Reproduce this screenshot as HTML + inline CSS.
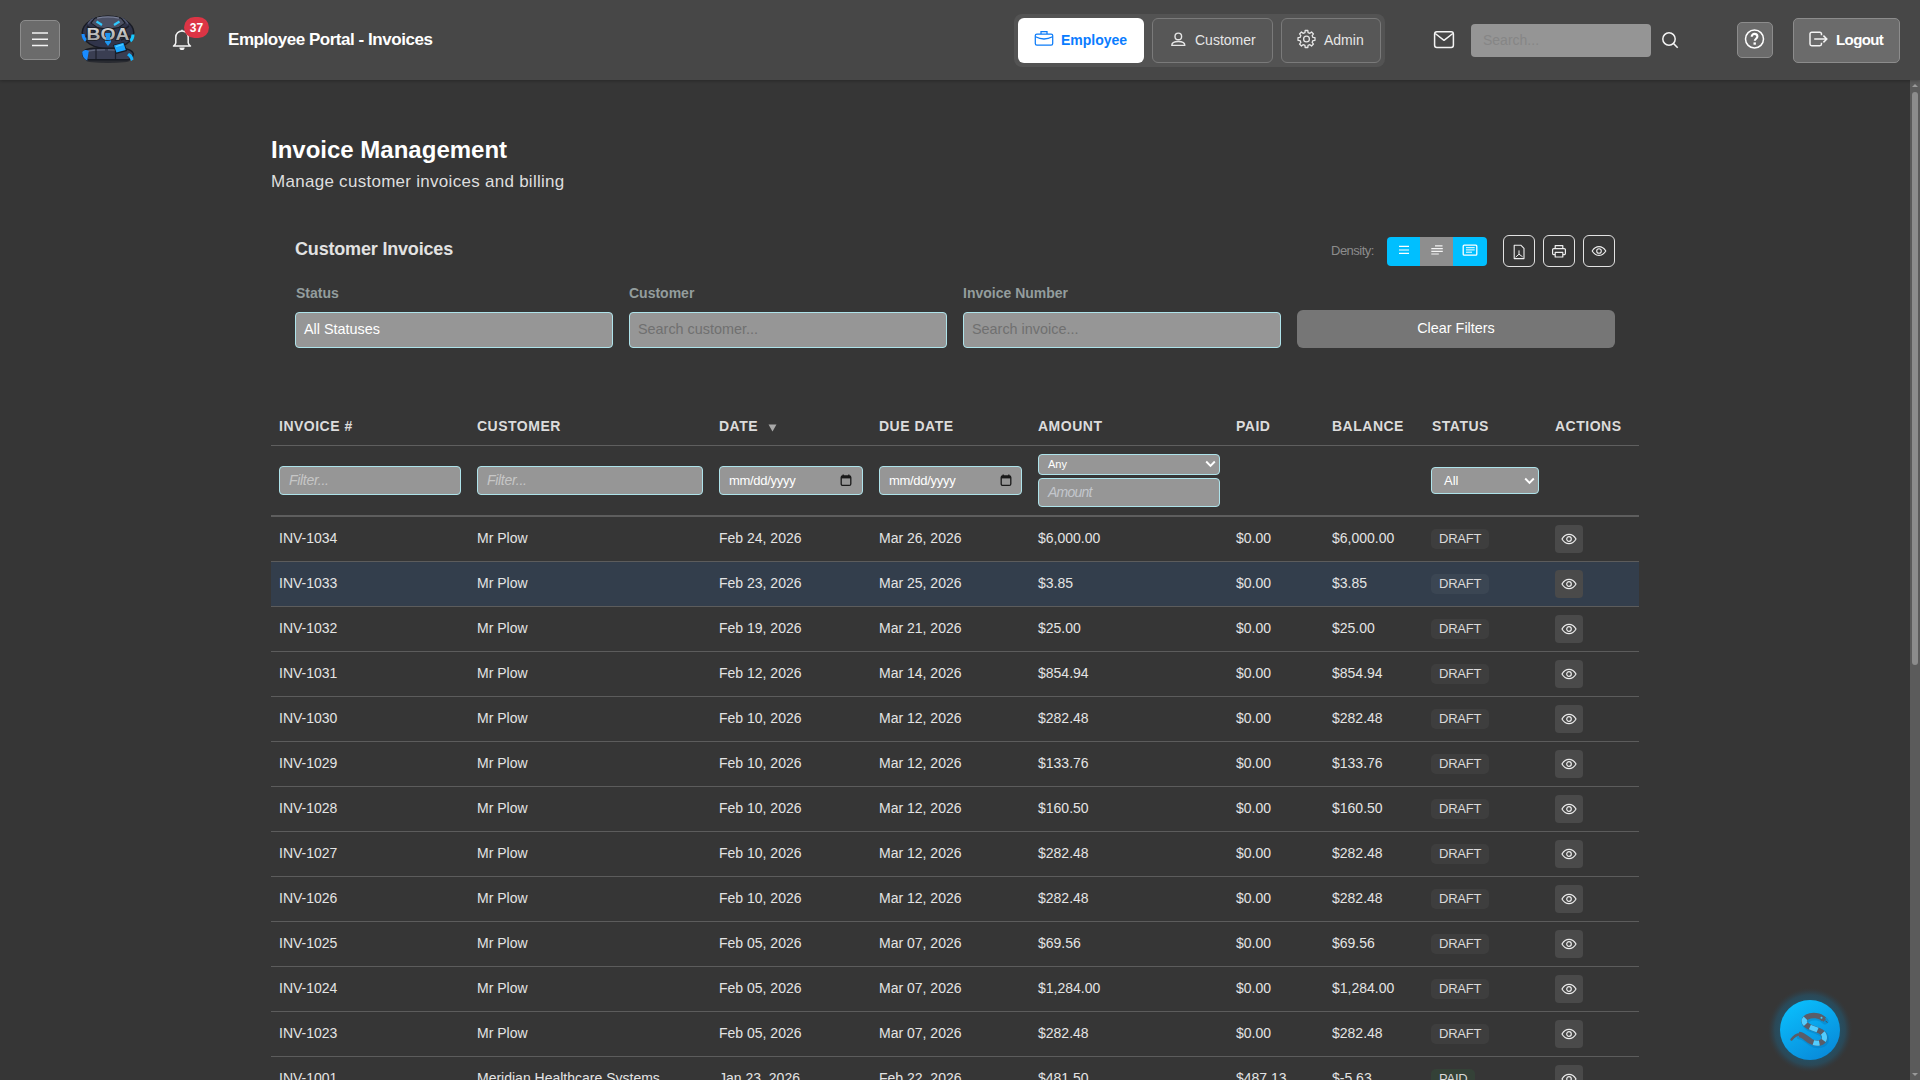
<!DOCTYPE html>
<html><head><meta charset="utf-8">
<style>
*{box-sizing:border-box;margin:0;padding:0}
html,body{width:1920px;height:1080px;overflow:hidden;background:#363636;font-family:"Liberation Sans",sans-serif;color:#e0e0e0}
.abs{position:absolute}
#hdr{position:absolute;left:0;top:0;width:1920px;height:80px;background:#474747;box-shadow:0 1px 3px rgba(0,0,0,0.25);z-index:2}
.btn-g{position:absolute;background:#6b6b6b;border:1px solid #8c8c8c;border-radius:5px}
.rolewrap{position:absolute;left:1014px;top:14px;width:371px;height:53px;background:#535353;border-radius:8px}
.role{position:absolute;top:18px;height:45px;border-radius:6px;font-size:14px}
.role span{position:absolute;top:0;line-height:44px;white-space:nowrap}
#sb{position:absolute;left:1910px;top:80px;width:10px;height:1000px;background:#5b5b5b}
.lbl{position:absolute;top:285px;font-size:14px;font-weight:bold;color:#939d9d;line-height:16px}
.inp{position:absolute;top:312px;width:318px;height:36px;background:#969696;border:1px solid #aee3ea;border-radius:4px;font-size:14.4px;padding-left:8px;line-height:33px;color:#707070}
.th{position:absolute;top:418px;font-size:14px;font-weight:bold;letter-spacing:0.5px;color:#dcdcdc;line-height:16px}
.row{position:absolute;left:271px;width:1368px;height:45px;border-bottom:1px solid #5c5c5c}
.c{position:absolute;top:0;line-height:42px;font-size:14px;color:#e4e4e4;white-space:nowrap}
.badge{position:absolute;left:1160px;top:12px;height:20px;padding:0 8px 0 8px;line-height:20px;background:rgba(255,255,255,0.045);border-radius:5px;font-size:13px;color:#dadada;letter-spacing:-0.25px}
.badge.paid{background:rgba(40,167,69,0.1)}
.eye{position:absolute;left:1284px;top:8px;width:28px;height:28px;background:#4a4a4a;border-radius:4px}
.eye svg{position:absolute;left:6px;top:8px}
.fin{position:absolute;height:29px;background:#969696;border:1px solid #aee3ea;border-radius:4px;font-size:13px;padding-left:9px;line-height:27px;white-space:nowrap}
.ib{position:absolute;top:235px;width:32px;height:32px;border:1px solid #e2e2e2;border-radius:6px}
.ib svg{position:absolute;left:7px;top:7px}
</style></head><body>
<div id="hdr">
  <div class="btn-g" style="left:20px;top:20px;width:40px;height:40px"></div>
  <svg class="abs" style="left:30px;top:30px" width="20" height="20" viewBox="0 0 20 20"><path d="M2 2.8h16M2 9h16M2 15.2h16" transform="translate(0,0.2)" stroke="#f2f2f2" stroke-width="1.5"/></svg>
  <svg class="abs" id="logo" style="left:78px;top:12px" width="60" height="54" viewBox="0 0 60 54">
    <defs><linearGradient id="silv" x1="0" y1="0" x2="0" y2="1"><stop offset="0" stop-color="#dcdcdc"/><stop offset="1" stop-color="#9a9a9a"/></linearGradient></defs>
    <ellipse cx="30" cy="48.5" rx="22" ry="2.5" fill="#1c1f28" opacity="0.7"/>
    <ellipse cx="30" cy="20.5" rx="26.5" ry="17" fill="#181b24"/>
    <ellipse cx="30" cy="20.5" rx="25" ry="15.5" fill="#30344a"/>
    <path d="M9 14l8 6M8 24l9 4M51 14l-8 6M52 24l-9 4" stroke="#1c1f2a" stroke-width="1.6"/>
    <path d="M10 12c2-3 4-5 7-6M50 12c-2-3-4-5-7-6" stroke="#505672" stroke-width="1.4" fill="none"/>
    <path d="M16 6Q30 1.5 44 6L47.5 11L41 16L30 18L19 16L12.5 11z" fill="#171a22"/>
    <path d="M17 6.8Q30 2.8 43 6.8L46.3 11L40.5 15L30 16.8L19.5 15L13.7 11z" fill="#4b5064"/>
    <path d="M19 6.2Q30 3.4 41 6.2" stroke="#7a8098" stroke-width="1.2" fill="none"/>
    <path d="M18.5 9.5l5.5 3.5M41.5 9.5l-5.5 3.5" stroke="#30c8ff" stroke-width="2.2"/>
    <path d="M5 22c0 3 1.2 5 3 6.5" stroke="#1a8cff" stroke-width="3" fill="none"/>
    <path d="M55 22.5c0 3-1 5-2.8 6.5" stroke="#18c8ff" stroke-width="3" fill="none"/>
    <path d="M4 41.5C5 37 10 35.5 18 35.5h22c8 0 14 1 16 6c0 4-3 7-7 7H11c-4 0-7-3-7-7z" fill="#171a22"/>
    <path d="M5.5 41.5C6.5 38 11 37 18 37h22c7 0 12.5 1 14.5 4.5c0 3.5-2.5 5.5-6 5.5H11.5c-3.5 0-6-2.2-6-5.5z" fill="#3a3e52"/>
    <path d="M10 39c5-1 10-1.2 17-1.2M30 37.8c5 0 9 .2 12 .8" stroke="#60667c" stroke-width="1.3" fill="none"/>
    <path d="M18 37v10M37.5 37v10" stroke="#1c1f2a" stroke-width="1.2"/>
    <path d="M4.2 40c0 4 1.5 7 5 8.5l1.6-9.5c-2.2-1.5-4.6-1.4-6.6 1z" fill="#1a8cff"/>
    <path d="M51 41c2.5 1 4 3 4.5 6.5l-2.5 1.5c-.8-2.6-2-4.6-4-5.8z" fill="#16b4ff"/>
    <path d="M35 33l11-3 3.2 9-11 3z" fill="#171a22"/>
    <path d="M36 33.4l9.4-2.6 2.4 7.2-9.4 2.6z" fill="#1aa6ff"/>
    <path d="M38 34.5l7-2" stroke="#5ad6ff" stroke-width="1.2"/>
    <path d="M27 21h6v9l-3 4l-3-4z" fill="#1e96f0"/>
    <text x="30" y="28" text-anchor="middle" font-family="Liberation Sans" font-weight="bold" font-size="15.8" fill="url(#silv)" stroke="#1a1c22" stroke-width="1.6" paint-order="stroke" textLength="43" lengthAdjust="spacingAndGlyphs">BOA</text>
    <path d="M28 21.5h4v6.5h-4z" fill="#1e96f0"/>
  </svg>
  <svg class="abs" style="left:171px;top:28px" width="22" height="24" viewBox="0 0 22 24"><path d="M11 3c-3.6 0-6.2 2.8-6.2 6.3v5.4c0 1-.9 2.3-2.3 3.3h17c-1.4-1-2.3-2.3-2.3-3.3V9.3C17.2 5.8 14.6 3 11 3z" fill="none" stroke="#f4f4f4" stroke-width="1.5" stroke-linejoin="round"/><path d="M11 1.8v1.4" stroke="#f4f4f4" stroke-width="1.5"/><path d="M8.4 19.4a2.6 2.6 0 0 0 5.2 0z" fill="#f4f4f4"/></svg>
  <div class="abs" style="left:184px;top:17px;width:25px;height:21px;border-radius:11px;background:#dc3545;color:#fff;font-size:12px;font-weight:bold;text-align:center;line-height:22px">37</div>
  <div class="abs" style="left:228px;top:30px;font-size:17px;font-weight:bold;color:#fff;line-height:19px;letter-spacing:-0.46px;white-space:nowrap">Employee Portal - Invoices</div>
  <div class="rolewrap"></div>
  <div class="role" style="left:1018px;width:126px;background:#fff;color:#0a7cff;font-weight:bold">
    <svg class="abs" style="left:16px;top:11px" width="20" height="20" viewBox="0 0 20 20"><rect x="1.3" y="5" width="17.4" height="11.2" rx="1.6" fill="none" stroke="#0d7cf8" stroke-width="1.25"/><path d="M7 5V2.6h6V5" fill="none" stroke="#0d7cf8" stroke-width="1.25"/><path d="M1.5 7.8Q10 12.2 18.5 7.8" fill="none" stroke="#0d7cf8" stroke-width="1.25"/></svg>
    <span style="left:43px">Employee</span></div>
  <div class="role" style="left:1152px;width:121px;background:#575757;border:1px solid #7a7a7a;color:#e6e6e6">
    <svg class="abs" style="left:17px;top:11px" width="18" height="18" viewBox="0 0 18 18"><circle cx="8.3" cy="6.4" r="3.3" fill="none" stroke="#e6e6e6" stroke-width="1.4"/><path d="M1.8 15.4c0-2.7 2.7-3.9 6.5-3.9s6.5 1.2 6.5 3.9z" fill="none" stroke="#e6e6e6" stroke-width="1.4" stroke-linejoin="round"/></svg>
    <span style="left:42px;top:-1px">Customer</span></div>
  <div class="role" style="left:1281px;width:100px;background:#575757;border:1px solid #7a7a7a;color:#e6e6e6">
    <svg class="abs" style="left:14px;top:10px" width="21" height="21" viewBox="-0.5 0 21 21"><circle cx="10" cy="10" r="2.9" fill="none" stroke="#e6e6e6" stroke-width="1.3"/><path d="M16.42 8.46 L18.49 8.65 L18.49 11.35 L16.42 11.54 L15.63 13.45 L16.96 15.05 L15.05 16.96 L13.45 15.63 L11.54 16.42 L11.35 18.49 L8.65 18.49 L8.46 16.42 L6.55 15.63 L4.95 16.96 L3.04 15.05 L4.37 13.45 L3.58 11.54 L1.51 11.35 L1.51 8.65 L3.58 8.46 L4.37 6.55 L3.04 4.95 L4.95 3.04 L6.55 4.37 L8.46 3.58 L8.65 1.51 L11.35 1.51 L11.54 3.58 L13.45 4.37 L15.05 3.04 L16.96 4.95 L15.63 6.55z" fill="none" stroke="#e6e6e6" stroke-width="1.3" stroke-linejoin="round"/></svg>
    <span style="left:42px;top:-1px">Admin</span></div>
  <svg class="abs" style="left:1433px;top:30px" width="22" height="20" viewBox="0 0 22 20"><rect x="1.6" y="1.8" width="18.8" height="15.6" rx="2.2" fill="none" stroke="#f4f4f4" stroke-width="1.5"/><path d="M2.2 3.5l8.8 6.8 8.8-6.8" fill="none" stroke="#f4f4f4" stroke-width="1.5" stroke-linejoin="round"/></svg>
  <div class="abs" style="left:1471px;top:24px;width:180px;height:33px;background:#959595;border-radius:4px;font-size:14px;color:#868686;padding-left:12px;line-height:32px">Search...</div>
  <svg class="abs" style="left:1660px;top:30px" width="20" height="20" viewBox="0 0 20 20"><circle cx="9" cy="9" r="6.2" fill="none" stroke="#f4f4f4" stroke-width="1.5"/><path d="M13.5 13.5l4.2 4.2" stroke="#f4f4f4" stroke-width="1.6"/></svg>
  <div class="btn-g" style="left:1737px;top:22px;width:36px;height:36px"></div>
  <svg class="abs" style="left:1744px;top:29px" width="22" height="21" viewBox="0 0 22 21"><circle cx="10.5" cy="10" r="9" fill="none" stroke="#fff" stroke-width="1.5"/><path d="M7.7 7.8c0-1.8 1.2-2.9 2.8-2.9s2.9 1 2.9 2.7c0 2.1-2.6 2.2-2.6 4.2" fill="none" stroke="#fff" stroke-width="2.1"/><rect x="9.5" y="13.4" width="2.4" height="2.3" fill="#fff"/></svg>
  <div class="btn-g" style="left:1793px;top:18px;width:107px;height:45px"></div>
  <svg class="abs" style="left:1807px;top:30px" width="24" height="18" viewBox="0 0 24 18"><path d="M14.5 5.2V3.9A1.7 1.7 0 0 0 12.8 2.2H4.7A1.7 1.7 0 0 0 3 3.9v10.2A1.7 1.7 0 0 0 4.7 15.8h8.1A1.7 1.7 0 0 0 14.5 14.1V12.8" fill="none" stroke="#f4f4f4" stroke-width="1.5"/><path d="M7.2 9h12.6M16.4 5.6l3.4 3.4-3.4 3.4" fill="none" stroke="#f4f4f4" stroke-width="1.5"/></svg>
  <div class="abs" style="left:1836px;top:31px;font-size:15px;font-weight:bold;color:#fff;line-height:18px;letter-spacing:-0.6px">Logout</div>
</div>
<div id="sb">
  <svg class="abs" style="left:0;top:0" width="10" height="10" viewBox="0 0 10 10"><path d="M2 7h6L5 4z" fill="#9a9a9a"/></svg>
  <div class="abs" style="left:2px;top:12px;width:6px;height:573px;border-radius:3px;background:#8c8c8c"></div>
  <svg class="abs" style="left:0;top:990px" width="10" height="10" viewBox="0 0 10 10"><path d="M2 3h6L5 6z" fill="#9a9a9a"/></svg>
</div>
<div class="abs" style="left:271px;top:137px;font-size:24px;font-weight:bold;color:#fff;line-height:26px;white-space:nowrap">Invoice Management</div>
<div class="abs" style="left:271px;top:172px;font-size:17px;color:#dedede;line-height:20px;letter-spacing:0.28px;white-space:nowrap">Manage customer invoices and billing</div>
<div class="abs" style="left:295px;top:239px;font-size:18px;font-weight:bold;color:#e2e2e2;line-height:20px;letter-spacing:-0.18px;white-space:nowrap">Customer Invoices</div>
<div class="abs" style="left:1331px;top:243px;font-size:13px;color:#8c8c8c;line-height:15px;letter-spacing:-0.5px">Density:</div>
<div class="abs" style="left:1387px;top:237px;width:100px;height:29px;border-radius:4px;overflow:hidden;background:#00bfff">
  <div class="abs" style="left:33px;top:0;width:33px;height:29px;background:#8e8e8e"></div>
  <svg class="abs" style="left:11px;top:8px" width="12" height="12" viewBox="0 0 12 12"><path d="M1 1.4h10M1 5h10M1 8.4h10" stroke="#fff" stroke-width="1.1"/></svg>
  <svg class="abs" style="left:44px;top:7px" width="13" height="13" viewBox="0 0 13 13"><path d="M4 1.9h7.5M0.3 4.6h11.5M0.3 7.4h11.5M0.3 10h7.5" stroke="#f4f4f4" stroke-width="1.2"/></svg>
  <svg class="abs" style="left:75px;top:7px" width="16" height="13" viewBox="0 0 16 13"><rect x="1.2" y="1.2" width="13.6" height="10" rx="1" fill="none" stroke="#fff" stroke-width="1.3"/><path d="M4 3.7h8.7M4 5.9h8.7M4 8.2h6" stroke="#fff" stroke-width="1"/></svg>
</div>
<div class="ib" style="left:1503px"><svg width="16" height="16" viewBox="0 0 16 16" style="left:7px;top:8px"><path d="M3.2 1.2h6.6l3.2 3.2v10.2H3.2z" fill="none" stroke="#eee" stroke-width="1.1" stroke-linejoin="round"/><path d="M4.6 13.2L8 10.2l3.6 2.6M8 10.2V6.4" fill="none" stroke="#eee" stroke-width="1"/></svg></div>
<div class="ib" style="left:1543px"><svg width="16" height="16" viewBox="0 0 16 16" style="left:7px;top:8px"><path d="M4.2 4.6V1.6h7.6v3M4 10.6H2.6a1 1 0 0 1-1-1V5.8a1.2 1.2 0 0 1 1.2-1.2h10.4a1.2 1.2 0 0 1 1.2 1.2v3.8a1 1 0 0 1-1 1H12M4.2 8.4h7.6v4.6H4.2z" fill="none" stroke="#eee" stroke-width="1.2" stroke-linejoin="round"/></svg></div>
<div class="ib" style="left:1583px"><svg width="16" height="16" viewBox="0 0 16 16" style="left:7px;top:7px"><path d="M1.2 8C2.9 5.2 5.2 3.6 8 3.6s5.1 1.6 6.8 4.4C13.1 10.8 10.8 12.4 8 12.4S2.9 10.8 1.2 8z" fill="none" stroke="#eee" stroke-width="1.1"/><circle cx="8" cy="8" r="2.3" fill="none" stroke="#eee" stroke-width="1.1"/></svg></div>

<div class="lbl" style="left:296px">Status</div>
<div class="lbl" style="left:629px">Customer</div>
<div class="lbl" style="left:963px">Invoice Number</div>
<div class="inp" style="left:295px;color:#fff">All Statuses</div>
<div class="inp" style="left:629px">Search customer...</div>
<div class="inp" style="left:963px">Search invoice...</div>
<div class="abs" style="left:1297px;top:310px;width:318px;height:38px;background:#767676;border-radius:6px;font-size:14.4px;color:#fff;text-align:center;line-height:37px">Clear Filters</div>

<div class="th" style="left:279px">INVOICE #</div>
<div class="th" style="left:477px">CUSTOMER</div>
<div class="th" style="left:719px">DATE</div>
<svg class="abs" style="left:768px;top:424px" width="9" height="8" viewBox="0 0 9 8"><path d="M0.5 0.5h8L4.5 7.5z" fill="#a8a8a8"/></svg>
<div class="th" style="left:879px">DUE DATE</div>
<div class="th" style="left:1038px">AMOUNT</div>
<div class="th" style="left:1236px">PAID</div>
<div class="th" style="left:1332px">BALANCE</div>
<div class="th" style="left:1432px">STATUS</div>
<div class="th" style="left:1555px">ACTIONS</div>
<div class="abs" style="left:271px;top:445px;width:1368px;height:1px;background:#5f5f5f"></div>
<div class="fin" style="left:279px;top:466px;width:182px;font-style:italic;color:#c6c6c6;font-size:14px;letter-spacing:-0.3px">Filter...</div>
<div class="fin" style="left:477px;top:466px;width:226px;font-style:italic;color:#c6c6c6;font-size:14px;letter-spacing:-0.3px">Filter...</div>
<div class="fin" style="left:719px;top:466px;width:144px;color:#fff;letter-spacing:-0.3px">mm/dd/yyyy
  <svg class="abs" style="left:120px;top:7px" width="12" height="13" viewBox="0 0 12 13"><path d="M3.2 .6v2M8.8 .6v2" stroke="#1a1a1a" stroke-width="1.3"/><rect x="1.2" y="2" width="9.6" height="9.4" rx="1.5" fill="none" stroke="#1a1a1a" stroke-width="1.3"/><rect x="1.2" y="2" width="9.6" height="2.4" fill="#1a1a1a"/></svg></div>
<div class="fin" style="left:879px;top:466px;width:143px;color:#fff;letter-spacing:-0.3px">mm/dd/yyyy
  <svg class="abs" style="left:120px;top:7px" width="12" height="13" viewBox="0 0 12 13"><path d="M3.2 .6v2M8.8 .6v2" stroke="#1a1a1a" stroke-width="1.3"/><rect x="1.2" y="2" width="9.6" height="9.4" rx="1.5" fill="none" stroke="#1a1a1a" stroke-width="1.3"/><rect x="1.2" y="2" width="9.6" height="2.4" fill="#1a1a1a"/></svg></div>
<div class="fin" style="left:1038px;top:454px;width:182px;height:21px;font-size:11px;line-height:19px;padding-left:9px;color:#fff">Any
  <svg class="abs" style="left:166px;top:5px" width="11" height="8" viewBox="0 0 11 8"><path d="M1.2 1.5l4.3 4.3 4.3-4.3" fill="none" stroke="#fff" stroke-width="1.9"/></svg></div>
<div class="fin" style="left:1038px;top:478px;width:182px;font-style:italic;color:#c3c6cc;font-size:14px;letter-spacing:-0.75px">Amount</div>
<div class="fin" style="left:1431px;top:467px;width:108px;height:27px;color:#fff;padding-left:12px;font-size:13px;line-height:25px">All
  <svg class="abs" style="left:92px;top:9px" width="11" height="8" viewBox="0 0 11 8"><path d="M1.2 1.5l4.3 4.3 4.3-4.3" fill="none" stroke="#fff" stroke-width="1.9"/></svg></div>
<div class="abs" style="left:271px;top:515px;width:1368px;height:2px;background:#5e5e5e"></div>
<div class="row" style="top:517px"><div class="c" style="left:8px">INV-1034</div><div class="c" style="left:206px">Mr Plow</div><div class="c" style="left:448px">Feb 24, 2026</div><div class="c" style="left:608px">Mar 26, 2026</div><div class="c" style="left:767px">$6,000.00</div><div class="c" style="left:965px">$0.00</div><div class="c" style="left:1061px">$6,000.00</div><div class="badge">DRAFT</div><div class="eye"><svg width="16" height="12" viewBox="0 0 16 12"><path d="M1 6C2.7 3 5.1 1.3 8 1.3S13.3 3 15 6c-1.7 3-4.1 4.7-7 4.7S2.7 9 1 6z" fill="none" stroke="#ececec" stroke-width="1.2"/><circle cx="8" cy="6" r="2.3" fill="none" stroke="#ececec" stroke-width="1.2"/></svg></div></div>
<div class="row" style="top:562px;background:#333e4c"><div class="c" style="left:8px">INV-1033</div><div class="c" style="left:206px">Mr Plow</div><div class="c" style="left:448px">Feb 23, 2026</div><div class="c" style="left:608px">Mar 25, 2026</div><div class="c" style="left:767px">$3.85</div><div class="c" style="left:965px">$0.00</div><div class="c" style="left:1061px">$3.85</div><div class="badge">DRAFT</div><div class="eye"><svg width="16" height="12" viewBox="0 0 16 12"><path d="M1 6C2.7 3 5.1 1.3 8 1.3S13.3 3 15 6c-1.7 3-4.1 4.7-7 4.7S2.7 9 1 6z" fill="none" stroke="#ececec" stroke-width="1.2"/><circle cx="8" cy="6" r="2.3" fill="none" stroke="#ececec" stroke-width="1.2"/></svg></div></div>
<div class="row" style="top:607px"><div class="c" style="left:8px">INV-1032</div><div class="c" style="left:206px">Mr Plow</div><div class="c" style="left:448px">Feb 19, 2026</div><div class="c" style="left:608px">Mar 21, 2026</div><div class="c" style="left:767px">$25.00</div><div class="c" style="left:965px">$0.00</div><div class="c" style="left:1061px">$25.00</div><div class="badge">DRAFT</div><div class="eye"><svg width="16" height="12" viewBox="0 0 16 12"><path d="M1 6C2.7 3 5.1 1.3 8 1.3S13.3 3 15 6c-1.7 3-4.1 4.7-7 4.7S2.7 9 1 6z" fill="none" stroke="#ececec" stroke-width="1.2"/><circle cx="8" cy="6" r="2.3" fill="none" stroke="#ececec" stroke-width="1.2"/></svg></div></div>
<div class="row" style="top:652px"><div class="c" style="left:8px">INV-1031</div><div class="c" style="left:206px">Mr Plow</div><div class="c" style="left:448px">Feb 12, 2026</div><div class="c" style="left:608px">Mar 14, 2026</div><div class="c" style="left:767px">$854.94</div><div class="c" style="left:965px">$0.00</div><div class="c" style="left:1061px">$854.94</div><div class="badge">DRAFT</div><div class="eye"><svg width="16" height="12" viewBox="0 0 16 12"><path d="M1 6C2.7 3 5.1 1.3 8 1.3S13.3 3 15 6c-1.7 3-4.1 4.7-7 4.7S2.7 9 1 6z" fill="none" stroke="#ececec" stroke-width="1.2"/><circle cx="8" cy="6" r="2.3" fill="none" stroke="#ececec" stroke-width="1.2"/></svg></div></div>
<div class="row" style="top:697px"><div class="c" style="left:8px">INV-1030</div><div class="c" style="left:206px">Mr Plow</div><div class="c" style="left:448px">Feb 10, 2026</div><div class="c" style="left:608px">Mar 12, 2026</div><div class="c" style="left:767px">$282.48</div><div class="c" style="left:965px">$0.00</div><div class="c" style="left:1061px">$282.48</div><div class="badge">DRAFT</div><div class="eye"><svg width="16" height="12" viewBox="0 0 16 12"><path d="M1 6C2.7 3 5.1 1.3 8 1.3S13.3 3 15 6c-1.7 3-4.1 4.7-7 4.7S2.7 9 1 6z" fill="none" stroke="#ececec" stroke-width="1.2"/><circle cx="8" cy="6" r="2.3" fill="none" stroke="#ececec" stroke-width="1.2"/></svg></div></div>
<div class="row" style="top:742px"><div class="c" style="left:8px">INV-1029</div><div class="c" style="left:206px">Mr Plow</div><div class="c" style="left:448px">Feb 10, 2026</div><div class="c" style="left:608px">Mar 12, 2026</div><div class="c" style="left:767px">$133.76</div><div class="c" style="left:965px">$0.00</div><div class="c" style="left:1061px">$133.76</div><div class="badge">DRAFT</div><div class="eye"><svg width="16" height="12" viewBox="0 0 16 12"><path d="M1 6C2.7 3 5.1 1.3 8 1.3S13.3 3 15 6c-1.7 3-4.1 4.7-7 4.7S2.7 9 1 6z" fill="none" stroke="#ececec" stroke-width="1.2"/><circle cx="8" cy="6" r="2.3" fill="none" stroke="#ececec" stroke-width="1.2"/></svg></div></div>
<div class="row" style="top:787px"><div class="c" style="left:8px">INV-1028</div><div class="c" style="left:206px">Mr Plow</div><div class="c" style="left:448px">Feb 10, 2026</div><div class="c" style="left:608px">Mar 12, 2026</div><div class="c" style="left:767px">$160.50</div><div class="c" style="left:965px">$0.00</div><div class="c" style="left:1061px">$160.50</div><div class="badge">DRAFT</div><div class="eye"><svg width="16" height="12" viewBox="0 0 16 12"><path d="M1 6C2.7 3 5.1 1.3 8 1.3S13.3 3 15 6c-1.7 3-4.1 4.7-7 4.7S2.7 9 1 6z" fill="none" stroke="#ececec" stroke-width="1.2"/><circle cx="8" cy="6" r="2.3" fill="none" stroke="#ececec" stroke-width="1.2"/></svg></div></div>
<div class="row" style="top:832px"><div class="c" style="left:8px">INV-1027</div><div class="c" style="left:206px">Mr Plow</div><div class="c" style="left:448px">Feb 10, 2026</div><div class="c" style="left:608px">Mar 12, 2026</div><div class="c" style="left:767px">$282.48</div><div class="c" style="left:965px">$0.00</div><div class="c" style="left:1061px">$282.48</div><div class="badge">DRAFT</div><div class="eye"><svg width="16" height="12" viewBox="0 0 16 12"><path d="M1 6C2.7 3 5.1 1.3 8 1.3S13.3 3 15 6c-1.7 3-4.1 4.7-7 4.7S2.7 9 1 6z" fill="none" stroke="#ececec" stroke-width="1.2"/><circle cx="8" cy="6" r="2.3" fill="none" stroke="#ececec" stroke-width="1.2"/></svg></div></div>
<div class="row" style="top:877px"><div class="c" style="left:8px">INV-1026</div><div class="c" style="left:206px">Mr Plow</div><div class="c" style="left:448px">Feb 10, 2026</div><div class="c" style="left:608px">Mar 12, 2026</div><div class="c" style="left:767px">$282.48</div><div class="c" style="left:965px">$0.00</div><div class="c" style="left:1061px">$282.48</div><div class="badge">DRAFT</div><div class="eye"><svg width="16" height="12" viewBox="0 0 16 12"><path d="M1 6C2.7 3 5.1 1.3 8 1.3S13.3 3 15 6c-1.7 3-4.1 4.7-7 4.7S2.7 9 1 6z" fill="none" stroke="#ececec" stroke-width="1.2"/><circle cx="8" cy="6" r="2.3" fill="none" stroke="#ececec" stroke-width="1.2"/></svg></div></div>
<div class="row" style="top:922px"><div class="c" style="left:8px">INV-1025</div><div class="c" style="left:206px">Mr Plow</div><div class="c" style="left:448px">Feb 05, 2026</div><div class="c" style="left:608px">Mar 07, 2026</div><div class="c" style="left:767px">$69.56</div><div class="c" style="left:965px">$0.00</div><div class="c" style="left:1061px">$69.56</div><div class="badge">DRAFT</div><div class="eye"><svg width="16" height="12" viewBox="0 0 16 12"><path d="M1 6C2.7 3 5.1 1.3 8 1.3S13.3 3 15 6c-1.7 3-4.1 4.7-7 4.7S2.7 9 1 6z" fill="none" stroke="#ececec" stroke-width="1.2"/><circle cx="8" cy="6" r="2.3" fill="none" stroke="#ececec" stroke-width="1.2"/></svg></div></div>
<div class="row" style="top:967px"><div class="c" style="left:8px">INV-1024</div><div class="c" style="left:206px">Mr Plow</div><div class="c" style="left:448px">Feb 05, 2026</div><div class="c" style="left:608px">Mar 07, 2026</div><div class="c" style="left:767px">$1,284.00</div><div class="c" style="left:965px">$0.00</div><div class="c" style="left:1061px">$1,284.00</div><div class="badge">DRAFT</div><div class="eye"><svg width="16" height="12" viewBox="0 0 16 12"><path d="M1 6C2.7 3 5.1 1.3 8 1.3S13.3 3 15 6c-1.7 3-4.1 4.7-7 4.7S2.7 9 1 6z" fill="none" stroke="#ececec" stroke-width="1.2"/><circle cx="8" cy="6" r="2.3" fill="none" stroke="#ececec" stroke-width="1.2"/></svg></div></div>
<div class="row" style="top:1012px"><div class="c" style="left:8px">INV-1023</div><div class="c" style="left:206px">Mr Plow</div><div class="c" style="left:448px">Feb 05, 2026</div><div class="c" style="left:608px">Mar 07, 2026</div><div class="c" style="left:767px">$282.48</div><div class="c" style="left:965px">$0.00</div><div class="c" style="left:1061px">$282.48</div><div class="badge">DRAFT</div><div class="eye"><svg width="16" height="12" viewBox="0 0 16 12"><path d="M1 6C2.7 3 5.1 1.3 8 1.3S13.3 3 15 6c-1.7 3-4.1 4.7-7 4.7S2.7 9 1 6z" fill="none" stroke="#ececec" stroke-width="1.2"/><circle cx="8" cy="6" r="2.3" fill="none" stroke="#ececec" stroke-width="1.2"/></svg></div></div>
<div class="row" style="top:1057px"><div class="c" style="left:8px">INV-1001</div><div class="c" style="left:206px">Meridian Healthcare Systems</div><div class="c" style="left:448px">Jan 23, 2026</div><div class="c" style="left:608px">Feb 22, 2026</div><div class="c" style="left:767px">$481.50</div><div class="c" style="left:965px">$487.13</div><div class="c" style="left:1061px">$-5.63</div><div class="badge paid">PAID</div><div class="eye"><svg width="16" height="12" viewBox="0 0 16 12"><path d="M1 6C2.7 3 5.1 1.3 8 1.3S13.3 3 15 6c-1.7 3-4.1 4.7-7 4.7S2.7 9 1 6z" fill="none" stroke="#ececec" stroke-width="1.2"/><circle cx="8" cy="6" r="2.3" fill="none" stroke="#ececec" stroke-width="1.2"/></svg></div></div>
<svg class="abs" style="left:1766px;top:986px" width="88" height="88" viewBox="0 0 88 88">
  <defs>
    <radialGradient id="glow" cx="44" cy="44" r="43" gradientUnits="userSpaceOnUse"><stop offset="0.68" stop-color="#254f63"/><stop offset="0.82" stop-color="#2b4856"/><stop offset="0.9" stop-color="#303f47" stop-opacity="0.7"/><stop offset="1" stop-color="#363636" stop-opacity="0"/></radialGradient>
    <linearGradient id="fabg" x1="0.2" y1="0" x2="0.8" y2="1"><stop offset="0" stop-color="#0abffd"/><stop offset="1" stop-color="#0888d8"/></linearGradient>
  </defs>
  <circle cx="44" cy="44" r="43" fill="url(#glow)"/>
  <circle cx="44" cy="44" r="30" fill="url(#fabg)"/>
  <path d="M58,33.5 C54,29 46,28.5 41,31 C36,34 38,39 45,41.5 C52,44 59,46 58.5,52 C58,57.5 50,58.5 45,55.5 C40,52.5 37,48.5 33,48.5" fill="none" stroke="#0a6fb0" stroke-width="7" stroke-linecap="round" opacity="0.35" transform="translate(1,1.5)"/>
  <path d="M33,48.5 C30,48.5 28,50.5 25.5,53.5" fill="none" stroke="#5a5c66" stroke-width="2.5" stroke-linecap="round"/>
  <path d="M58,33.5 C54,29 46,28.5 41,31 C36,34 38,39 45,41.5 C52,44 59,46 58.5,52 C58,57.5 50,58.5 45,55.5 C40,52.5 37,48.5 33,48.5" fill="none" stroke="#5a5d69" stroke-width="5.5"/>
  <path d="M58,33.5 C54,29 46,28.5 41,31 C36,34 38,39 45,41.5 C52,44 59,46 58.5,52 C58,57.5 50,58.5 45,55.5 C40,52.5 37,48.5 33,48.5" fill="none" stroke="#52cdff" stroke-width="5" stroke-dasharray="0 20 7 5 8 6 8 5 6 60"/>
  <path d="M56,31 l4,2.5 -3,2.5z" fill="#5a5d69"/>
  <path d="M59.5,35 l2,1.5" stroke="#4a4d58" stroke-width="1"/>
  <circle cx="55.5" cy="31.8" r="1" fill="#3ad0ff"/>
</svg>
</body></html>
